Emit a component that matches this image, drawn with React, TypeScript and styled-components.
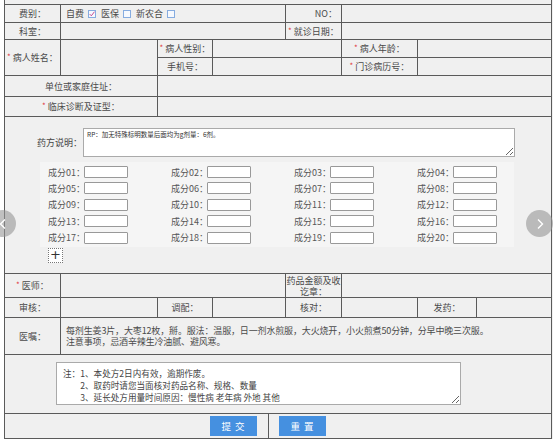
import React from 'react';
import styled, { createGlobalStyle } from 'styled-components';

const GlobalStyle = createGlobalStyle`
  html, body {
    margin: 0;
    padding: 0;
    background: #fff;
  }
  body {
    font-family: "Noto Sans CJK SC", "Noto Sans", sans-serif;
    color: #444;
    overflow: hidden;
  }
`;

const Page = styled.div`
  position: relative;
  width: 557px;
  height: 440px;
  overflow: hidden;
  padding-left: 4px;
  box-sizing: border-box;
`;

const Table = styled.div`
  display: grid;
  grid-template-columns: 56px 97px 55px 73px 56px 76px 59px 75px;
  grid-template-rows: 5px 18px 17px 18px 18px 21px 20px 157px 24px 20px 37px 59px 25px;
  width: 548px;
  border-left: 1px solid #5a5a5a;
  background: #f0f0f0;
`;

const Cell = styled.div<{ $col: string; $row?: string; $align?: 'center' | 'right' | 'left' }>`
  grid-column: ${({ $col }) => $col};
  grid-row: ${({ $row }) => $row ?? 'auto'};
  box-sizing: border-box;
  border-right: 1px solid #5a5a5a;
  border-bottom: 1px solid #5a5a5a;
  display: flex;
  align-items: center;
  justify-content: ${({ $align = 'center' }) =>
    $align === 'right' ? 'flex-end' : $align === 'left' ? 'flex-start' : 'center'};
  padding: ${({ $align }) => ($align === 'right' ? '0 4px 0 0' : $align === 'left' ? '0 0 0 5px' : '0')};
  font-size: 9px;
  line-height: 11px;
  color: #4a4a4a;
  text-align: center;
  white-space: nowrap;
`;

const Req = styled.span`
  color: #e0393e;
  font-size: 8px;
  margin-right: 2px;
  position: relative;
  top: -1px;
`;

const Choice = styled.span`
  display: inline-flex;
  align-items: center;
  margin-right: 5px;
`;

const Box = styled.span<{ $checked?: boolean }>`
  display: inline-flex;
  align-items: center;
  justify-content: center;
  box-sizing: border-box;
  width: 8px;
  height: 8px;
  margin-left: 4px;
  border: 1px solid #86ace0;
  background: #f6f9fe;

  svg {
    display: ${({ $checked }) => ($checked ? 'block' : 'none')};
  }
`;

const Rx = styled.div`
  grid-column: 1 / -1;
  box-sizing: border-box;
  border-right: 1px solid #5a5a5a;
  border-bottom: 1px solid #5a5a5a;
  padding-top: 11px;
  display: flex;
  flex-direction: column;
`;

const RxRow = styled.div`
  display: flex;
  align-items: center;
`;

const RxLabel = styled.span`
  width: 77px;
  text-align: right;
  font-size: 9px;
  color: #444;
`;

const RxText = styled.textarea`
  width: 432px;
  height: 29px;
  margin: 0 0 0 1px;
  padding: 1px 3px;
  box-sizing: border-box;
  border: 1px solid #aaa;
  background: #fff;
  font-family: "Noto Sans CJK SC", sans-serif;
  font-size: 6.5px;
  line-height: 9px;
  color: #333;
  resize: both;
`;

const Herbs = styled.div`
  display: grid;
  grid-template-columns: repeat(4, 123px);
  row-gap: 4.4px;
  width: 466px;
  margin: 5px 0 0 35px;
  padding: 4px 0 3px 8px;
  background: #f5f5f5;
`;

const Herb = styled.div`
  display: flex;
  align-items: center;
  height: 12px;
`;

const HerbLabel = styled.span`
  width: 36px;
  text-align: right;
  font-size: 9px;
  color: #555;
  white-space: nowrap;
`;

const HerbInput = styled.input`
  width: 44px;
  height: 12px;
  margin: 0;
  padding: 0;
  box-sizing: border-box;
  border: 1px solid #999;
  border-radius: 1px;
  background: #fff;
`;

const AddButton = styled.button`
  width: 15px;
  height: 15px;
  margin: 1px 0 0 43px;
  padding: 0;
  border: 1px dotted #777;
  background: #fff;
  color: #333;
  font-family: "DejaVu Sans", sans-serif;
  font-size: 13px;
  line-height: 12px;
`;

const TwoLine = styled.span`
  white-space: normal;
  width: 55px;
  line-height: 11px;
`;

const Advice = styled.div`
  white-space: normal;
  text-align: left;
  line-height: 11.5px;
  letter-spacing: -0.15px;
`;

const Notes = styled.div`
  grid-column: 1 / -1;
  box-sizing: border-box;
  border-right: 1px solid #5a5a5a;
  border-bottom: 1px solid #5a5a5a;
  padding: 7px 0 0 51px;
`;

const NotesText = styled.textarea`
  width: 405px;
  height: 43px;
  margin: 0;
  padding: 4px 6px;
  box-sizing: border-box;
  border: 1px solid #aaa;
  background: #fff;
  font-family: "Noto Sans CJK SC", sans-serif;
  font-size: 8.6px;
  line-height: 12px;
  color: #444;
  resize: both;
  overflow: hidden;
`;

const Actions = styled.div`
  grid-column: 1 / -1;
  display: grid;
  grid-template-columns: 264px 1fr;
  box-sizing: border-box;
  border-right: 1px solid #5a5a5a;
  border-bottom: 1px solid #5a5a5a;
`;

const ActionCell = styled.div<{ $side: 'left' | 'right' }>`
  display: flex;
  align-items: center;
  justify-content: ${({ $side }) => ($side === 'left' ? 'flex-end' : 'flex-start')};
  padding: ${({ $side }) => ($side === 'left' ? '0 11px 0 0' : '0 0 0 10px')};
  border-right: ${({ $side }) => ($side === 'left' ? '1px solid #5a5a5a' : 'none')};
`;

const Button = styled.button`
  width: 47px;
  height: 20px;
  margin: 0;
  padding: 0;
  border: none;
  background: #4590e0;
  color: #fff;
  font-family: "Noto Sans CJK SC", sans-serif;
  font-size: 9.5px;
  letter-spacing: 1px;
`;

const Nav = styled.div<{ $side: 'left' | 'right' }>`
  position: absolute;
  top: 210px;
  ${({ $side }) => ($side === 'left' ? 'left: -11px;' : 'left: 526px;')}
  width: 27px;
  height: 27px;
  border-radius: 50%;
  background: rgba(150, 150, 150, 0.6);
  display: flex;
  align-items: center;
  justify-content: center;
`;

const herbs = Array.from({ length: 20 }, (_, i) => String(i + 1).padStart(2, '0'));

const Chevron = ({ dir }: { dir: 'left' | 'right' }) => (
  <svg width="8" height="12" viewBox="0 0 8 12">
    <path
      d={dir === 'right' ? 'M2 1.5 L6.5 6 L2 10.5' : 'M6 1.5 L1.5 6 L6 10.5'}
      fill="none"
      stroke="#fff"
      strokeWidth="1.4"
    />
  </svg>
);

const Check = () => (
  <svg width="6" height="6" viewBox="0 0 7 7">
    <path d="M0.8 3.6 L2.7 5.6 L6.4 0.8" fill="none" stroke="#c2408a" strokeWidth="1.1" />
  </svg>
);

const App = () => (
  <Page>
    <GlobalStyle />
    <Table>
      <Cell $col="1 / -1" />

      <Cell $col="1">费别：</Cell>
      <Cell $col="2 / 5" $align="left">
        <Choice>
          自费<Box $checked><Check /></Box>
        </Choice>
        <Choice>
          医保<Box />
        </Choice>
        <Choice>
          新农合<Box />
        </Choice>
      </Cell>
      <Cell $col="5" $align="right">NO：</Cell>
      <Cell $col="6 / 9" />

      <Cell $col="1">科室：</Cell>
      <Cell $col="2 / 5" />
      <Cell $col="5">
        <Req>*</Req>就诊日期：
      </Cell>
      <Cell $col="6 / 9" />

      <Cell $col="1" $row="4 / 6">
        <Req>*</Req>病人姓名：
      </Cell>
      <Cell $col="2" $row="4 / 6" />
      <Cell $col="3">
        <Req>*</Req>病人性别：
      </Cell>
      <Cell $col="4 / 6" />
      <Cell $col="6">
        <Req>*</Req>病人年龄：
      </Cell>
      <Cell $col="7 / 9" />
      <Cell $col="3">手机号：</Cell>
      <Cell $col="4 / 6" />
      <Cell $col="6">
        <Req>*</Req>门诊病历号：
      </Cell>
      <Cell $col="7 / 9" />

      <Cell $col="1 / 3">单位或家庭住址：</Cell>
      <Cell $col="3 / 9" />
      <Cell $col="1 / 3">
        <Req>*</Req>临床诊断及证型：
      </Cell>
      <Cell $col="3 / 9" />

      <Rx>
        <RxRow>
          <RxLabel>药方说明：</RxLabel>
          <RxText defaultValue="RP：加无特殊标明数量后面均为g剂量：6剂。" />
        </RxRow>
        <Herbs>
          {herbs.map((n) => (
            <Herb key={n}>
              <HerbLabel>成分{n}：</HerbLabel>
              <HerbInput />
            </Herb>
          ))}
        </Herbs>
        <AddButton>+</AddButton>
      </Rx>

      <Cell $col="1">
        <Req>*</Req>医师：
      </Cell>
      <Cell $col="2 / 5" />
      <Cell $col="5">
        <TwoLine>药品金额及收讫章：</TwoLine>
      </Cell>
      <Cell $col="6 / 9" />

      <Cell $col="1">审核：</Cell>
      <Cell $col="2" />
      <Cell $col="3">调配：</Cell>
      <Cell $col="4" />
      <Cell $col="5">核对：</Cell>
      <Cell $col="6" />
      <Cell $col="7">发药：</Cell>
      <Cell $col="8" />

      <Cell $col="1">医嘱：</Cell>
      <Cell $col="2 / 9" $align="left">
        <Advice>
          每剂生姜3片，大枣12枚，掰。服法：温服，日一剂水煎服，大火烧开，小火煎煮50分钟，分早中晚三次服。
          <br />
          注意事项，忌酒辛辣生冷油腻、避风寒。
        </Advice>
      </Cell>

      <Notes>
        <NotesText
          defaultValue={
            '注：1、本处方2日内有效，逾期作废。\n　　2、取药时请您当面核对药品名称、规格、数量\n　　3、延长处方用量时间原因：慢性病 老年病 外地 其他'
          }
        />
      </Notes>

      <Actions>
        <ActionCell $side="left">
          <Button>提 交</Button>
        </ActionCell>
        <ActionCell $side="right">
          <Button>重 置</Button>
        </ActionCell>
      </Actions>
    </Table>
    <Nav $side="left">
      <Chevron dir="left" />
    </Nav>
    <Nav $side="right">
      <Chevron dir="right" />
    </Nav>
  </Page>
);

export default App;
